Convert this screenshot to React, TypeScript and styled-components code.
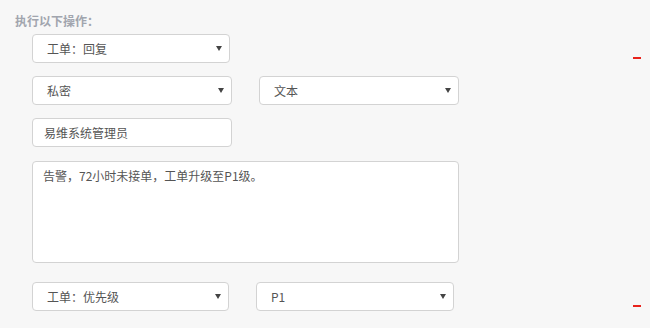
import styled, { createGlobalStyle } from "styled-components";

const GlobalStyle = createGlobalStyle`
  html, body {
    margin: 0;
    padding: 0;
    background: #f7f7f7;
    font-family: "Noto Sans CJK SC", "Noto Sans", sans-serif;
  }
`;

function Caret() {
  return (
    <svg width="6" height="5" viewBox="0 0 6 5">
      <path d="M0 0 L6 0 L3 5 Z" fill="#444" />
    </svg>
  );
}

function Select({ value, width }: { value: string; width: number }) {
  return (
    <SelectBox $width={width}>
      <span>{value}</span>
      <Caret />
    </SelectBox>
  );
}

function App() {
  return (
    <>
      <GlobalStyle />
      <Page>
        <Label>执行以下操作：</Label>
        <Fields>
          <Row $gap={13}>
            <Select value="工单：回复" width={198} />
            <Remove />
          </Row>
          <Row $gap={13}>
            <Select value="私密" width={200} />
            <Select value="文本" width={200} />
          </Row>
          <Row $gap={14}>
            <Input>易维系统管理员</Input>
          </Row>
          <Row $gap={19}>
            <TextArea>告警，72小时未接单，工单升级至P1级。</TextArea>
          </Row>
          <Row $gap={0}>
            <Select value="工单：优先级" width={197} />
            <Select value="P1" width={198} />
            <Remove />
          </Row>
        </Fields>
      </Page>
    </>
  );
}

const Page = styled.div`
  padding: 13px 9px 0 15px;
  height: 328px;
  box-sizing: border-box;
  overflow: hidden;
`;

const Label = styled.div`
  font-size: 12px;
  font-weight: bold;
  color: #a1a5ae;
  line-height: 16px;
`;

const Fields = styled.div`
  padding: 5px 0 0 17px;
  display: flex;
  flex-direction: column;
`;

const Row = styled.div<{ $gap: number }>`
  display: flex;
  align-items: flex-start;
  gap: 27px;
  margin-bottom: ${(p) => p.$gap}px;
`;

const Field = styled.div`
  box-sizing: border-box;
  height: 29px;
  background: #fff;
  border: 1px solid #d3d3d3;
  border-radius: 4px;
  font-size: 12px;
  color: #555;
`;

const SelectBox = styled(Field)<{ $width: number }>`
  width: ${(p) => p.$width}px;
  display: flex;
  align-items: center;
  justify-content: space-between;
  padding: 0 7px 0 14px;
`;

const Input = styled(Field)`
  width: 200px;
  display: flex;
  align-items: center;
  padding: 0 11px;
`;

const TextArea = styled(Field)`
  width: 427px;
  height: 102px;
  padding: 4px 10px;
  line-height: 20px;
`;

const Remove = styled.div`
  margin-left: auto;
  margin-top: 23px;
  width: 8px;
  height: 2px;
  background: #e8231c;
`;

export default App;
